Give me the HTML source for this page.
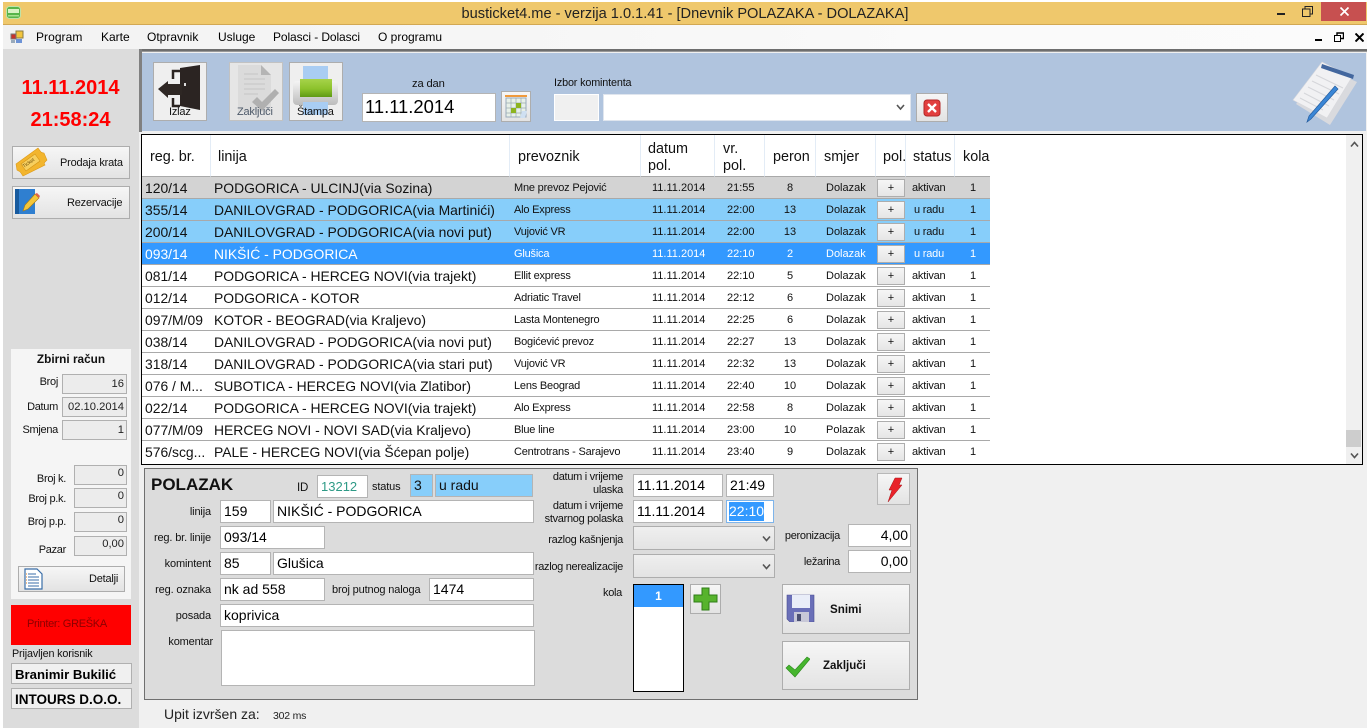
<!DOCTYPE html>
<html><head><meta charset="utf-8"><title>busticket4.me</title>
<style>
html,body{margin:0;padding:0}
body{width:1372px;height:728px;overflow:hidden;background:#fff;position:relative;font:12px/16px "Liberation Sans",sans-serif;color:#000}
div,span,svg{position:absolute;white-space:nowrap;box-sizing:border-box}
.l{font-size:11px;letter-spacing:-.15px;color:#111}
.m{font-size:11px;letter-spacing:-.3px;color:#111}
.in{background:#fff;border:1px solid #b4b4b4;font-size:14px;line-height:21px;padding-left:3px;overflow:hidden}
.sb{background:#ececec;border:1px solid #b0b0b0;font-size:11.2px;line-height:18px;text-align:right;padding-right:2px;color:#222}
.btn{background:linear-gradient(#f6f6f6,#e3e3e3);border:1px solid #adadad;color:#111}
.combo{background:linear-gradient(#efefef,#e3e3e3);border:1px solid #adadad}
.bl{font-size:11px;letter-spacing:-.2px;color:#111}
.row{left:142px;width:848px;height:22px;border-bottom:1px solid #a9a9a9;font-size:13.9px;line-height:21px;color:#111;background:#fff}
.row span{top:1px}
.r{left:3px;width:66px;overflow:hidden;height:20px}
.n{left:72px}
.p{left:372px;font-size:11px;letter-spacing:-.2px}
.d{left:510px;font-size:11px}
.t{left:585px;font-size:11px}
.o{left:628px;width:40px;text-align:center;font-size:11px}
.s{left:684px;font-size:11px}
.b{left:735px;top:2px!important;width:28px;height:18px;background:linear-gradient(#f6f6f6,#e6e6e6);border:1px solid #adadad;text-align:center;font-size:11px;line-height:17px;color:#111}
.st{left:770px;font-size:11px;letter-spacing:-.2px}
.k{left:824px;width:14px;text-align:center;font-size:11px}
.g{background:#d3d3d3}.c{background:#87cefa}.h{background:#3399ff;color:#fff}
.hd{top:135px;height:42px;background:#fff;border-right:1px solid #e3ecf6;border-bottom:1px solid #a9a9a9;font-size:14.4px;line-height:17px;color:#111}
.hd span{top:14px}
</style></head><body>

<!-- title bar -->
<div style="left:3px;top:2px;width:1364px;height:23px;background:#efc86c;border-bottom:1px solid #d2a853"></div>
<svg style="left:6px;top:6px" width="15" height="14" viewBox="0 0 15 14"><rect x=".5" y=".5" width="14" height="12" rx="3" fill="#58b44a" stroke="#bfe3a8"/><rect x="2" y="3" width="11" height="4" fill="#d9f2c4"/><rect x="2" y="9" width="11" height="1.500" fill="#a8e08e"/></svg>
<div style="left:3px;width:1364px;top:5px;text-align:center;font-size:14.6px;line-height:18px;color:#222">busticket4.me - verzija 1.0.1.41 - [Dnevnik POLAZAKA - DOLAZAKA]</div>
<div style="left:1277px;top:13px;width:8px;height:2px;background:#222"></div>
<svg style="left:1302px;top:6px" width="11" height="11" viewBox="0 0 11 11" fill="none" stroke="#222"><rect x=".5" y="3" width="7.500" height="7.500" stroke-width="1"/><path d="M3 3V.5h7.500V8H8"/></svg>
<div style="left:1321px;top:2px;width:45px;height:19px;background:#c75050"></div>
<svg style="left:1340px;top:7px" width="9" height="9" viewBox="0 0 9 9" stroke="#fff" stroke-width="1.700"><path d="M.5.5l8 8M8.500.5l-8 8"/></svg>

<!-- menu -->
<div style="left:3px;top:25px;width:1364px;height:24px;background:linear-gradient(90deg,#f2f2f2,#fafafa 70%,#fbfbfb)"></div>
<svg style="left:10px;top:30px" width="14" height="14" viewBox="0 0 14 14"><rect x="6" y="1" width="7" height="7" fill="#f2c53d" stroke="#8a7a40"/><rect x="1" y="4" width="5" height="5" fill="#c8322b" stroke="#777"/><rect x="6" y="9" width="6" height="4" fill="#6d93d6"/><rect x="1" y="10" width="4" height="3" fill="#9ab"/></svg>
<span style="left:36px;top:29px;letter-spacing:.05px">Program</span><span style="left:101px;top:29px">Karte</span><span style="left:147px;top:29px">Otpravnik</span><span style="left:218px;top:29px">Usluge</span><span style="left:273px;top:29px;letter-spacing:-.1px">Polasci - Dolasci</span><span style="left:378px;top:29px">O programu</span>
<div style="left:1315px;top:39px;width:7px;height:2px;background:#000"></div>
<svg style="left:1334px;top:32px" width="10" height="10" viewBox="0 0 10 10" fill="none" stroke="#000"><rect x=".5" y="3.500" width="6" height="6" stroke-width="1"/><path d="M3 3V1h6.500v5.500H7" stroke-width="1.400"/></svg>
<svg style="left:1355px;top:33px" width="9" height="9" viewBox="0 0 9 9" stroke="#000" stroke-width="2"><path d="M.5.5l8 8M8.500.5l-8 8"/></svg>

<!-- background -->
<div style="left:3px;top:49px;width:136px;height:679px;background:#dcdcdc"></div>
<div style="left:139px;top:49px;width:1228px;height:679px;background:#f0f0f0"></div>
<div style="left:139px;top:49px;width:1228px;height:3px;background:#6e6e6e;border-bottom:1px solid #999"></div>
<div style="left:139px;top:49px;width:3px;height:83px;background:#808080"></div>
<div style="left:142px;top:53px;width:1224px;height:78px;background:#b0c4de"></div>

<!-- left panel -->
<div style="left:3px;width:135px;top:77px;text-align:center;font-size:20px;line-height:22px;font-weight:bold;color:#f00">11.11.2014</div>
<div style="left:3px;width:135px;top:109px;text-align:center;font-size:20px;line-height:22px;font-weight:bold;color:#f00">21:58:24</div>
<div class="btn" style="left:12px;top:146px;width:118px;height:33px"></div>
<svg style="left:15px;top:147px" width="34" height="31" viewBox="0 0 34 31"><path d="M1 17L23 1l3 4c1 1 2 1 3 1l3 7-2 2c-1 1-1 2 0 3L8 29l-2-3c-1-2-3-2-4-3z" fill="#f2b52e" stroke="#dd9a18" stroke-width=".6"/><path d="M6 17l14-10 5 7-14 10z" fill="#f7cf5e" stroke="#d29417" stroke-width=".6"/><text x="9" y="21" font-size="5" font-family="Liberation Sans" fill="#6a4a08" transform="rotate(-35 9 21)">Ticket</text></svg>
<span class="bl" style="left:60px;top:155px">Prodaja krata</span>
<div class="btn" style="left:12px;top:186px;width:118px;height:33px"></div>
<svg style="left:14px;top:188px" width="26" height="28" viewBox="0 0 26 28"><rect x="1" y="1" width="20" height="25" fill="#2f7fd0"/><rect x="1" y="1" width="4" height="25" fill="#175a9e"/><path d="M9 23l2-6L21 6l4 4-11 11z" fill="#f4c63a" stroke="#a87a10" stroke-width=".6"/><path d="M21 6l2-1 3 3-1 2z" fill="#e0604f"/></svg>
<span class="bl" style="left:67px;top:195px">Rezervacije</span>

<div style="left:11px;top:349px;width:120px;height:250px;background:#f5f5f5"></div>
<div style="left:11px;width:120px;top:351px;text-align:center;font-size:11.8px;font-weight:bold;color:#111">Zbirni račun</div>
<span class="m" style="right:1314px;top:374px">Broj</span><div class="sb" style="left:62px;top:374px;width:65px;height:20px">16</div>
<span class="m" style="right:1314px;top:399px">Datum</span><div class="sb" style="left:62px;top:397px;width:65px;height:20px">02.10.2014</div>
<span class="m" style="right:1314px;top:422px">Smjena</span><div class="sb" style="left:62px;top:420px;width:65px;height:20px">1</div>
<span class="m" style="right:1306px;top:471px">Broj k.</span><div class="sb" style="left:74px;top:465px;width:53px;height:20px;line-height:15px">0</div>
<span class="m" style="right:1306px;top:491px">Broj p.k.</span><div class="sb" style="left:74px;top:488px;width:53px;height:20px;line-height:15px">0</div>
<span class="m" style="right:1306px;top:514px">Broj p.p.</span><div class="sb" style="left:74px;top:512px;width:53px;height:20px;line-height:15px">0</div>
<span class="m" style="right:1306px;top:542px">Pazar</span><div class="sb" style="left:74px;top:536px;width:53px;height:20px;line-height:15px">0,00</div>
<div class="btn" style="left:18px;top:566px;width:107px;height:26px"></div>
<svg style="left:23px;top:568px" width="21" height="22" viewBox="0 0 21 22"><path d="M2 1h12l5 5v15H2z" fill="#fff" stroke="#3a6ea8" stroke-width="1.200"/><path d="M5 6h8M5 9h11M5 12h11M5 15h11M5 18h11" stroke="#3a6ea8"/><path d="M3 6h1M3 9h1M3 12h1M3 15h1" stroke="#e08020"/></svg>
<span class="bl" style="left:89px;top:571px">Detalji</span>
<div style="left:11px;top:605px;width:120px;height:40px;background:#f00"></div>
<span style="left:27px;top:616px;color:#8b0000;font-size:11px;letter-spacing:-.3px">Printer: GREŠKA</span>
<span class="l" style="left:12px;top:646px;font-size:10.8px">Prijavljen korisnik</span>
<div style="left:11px;top:663px;width:121px;height:21px;background:#f0f0f0;border:1px solid #b0b0b0;font-weight:bold;font-size:13.2px;line-height:22px;padding-left:3px">Branimir Bukilić</div>
<div style="left:11px;top:688px;width:121px;height:21px;background:#f0f0f0;border:1px solid #b0b0b0;font-weight:bold;font-size:13.5px;line-height:22px;padding-left:3px">INTOURS D.O.O.</div>

<!-- toolbar -->
<div class="btn" style="left:153px;top:62px;width:54px;height:59px;background:#efefef"></div>
<svg style="left:157px;top:64px" width="46" height="47" viewBox="0 0 46 47"><path d="M16 15V7h7M16 34v8h7" fill="none" stroke="#2a2320" stroke-width="2.500"/><path d="M23 4L43 1v45l-20-4z" fill="#2b2422"/><rect x="27" y="19" width="2" height="3" fill="#ddd"/><path d="M1 25l10-8v3h14v11H11v3z" fill="#2e2724"/></svg>
<span class="bl" style="left:169px;top:104px">Izlaz</span>
<div class="btn" style="left:229px;top:62px;width:54px;height:59px;background:#e6e6e6;border-color:#c2c2c2"></div>
<svg style="left:236px;top:64px" width="46" height="50" viewBox="0 0 46 50"><path d="M2 1h23l10 10v37H2z" fill="#dbdbdb"/><path d="M25 1l10 10H25z" fill="#b5b5b5"/><path d="M8 10h14M8 15h21M8 20h21M8 25h21M8 30h14" stroke="#c4c4c4"/><path d="M16 38l5-5 5 5 13-13 4 4-17 18z" fill="#b0b0b0"/></svg>
<span class="bl" style="left:237px;top:104px;color:#4e5a6a">Zaključi</span>
<div class="btn" style="left:289px;top:62px;width:54px;height:59px;background:#efefef"></div>
<svg style="left:292px;top:64px" width="48" height="52" viewBox="0 0 48 52"><defs><linearGradient id="g1" x1="0" y1="0" x2="0" y2="1"><stop offset="0" stop-color="#a6d34a"/><stop offset=".55" stop-color="#8cc22c"/><stop offset="1" stop-color="#5f9a14"/></linearGradient><linearGradient id="g2" x1="0" y1="0" x2="0" y2="1"><stop offset="0" stop-color="#f4f4f4"/><stop offset="1" stop-color="#bcbcbc"/></linearGradient></defs><rect x="11" y="2" width="25" height="15" fill="#a9cdf3"/><rect x="1" y="17" width="45" height="24" rx="4" fill="url(#g2)"/><rect x="8" y="15" width="32" height="18" fill="url(#g1)"/><rect x="11" y="38" width="25" height="13" fill="#a9cdf3"/></svg>
<span class="bl" style="left:297px;top:104px">Štampa</span>
<span class="l" style="left:412px;top:76px;font-size:11.2px">za dan</span>
<div style="left:362px;top:93px;width:134px;height:29px;background:#fff;border:1px solid #b4b4b4;font-size:18.4px;line-height:26px;padding-left:2px">11.11.2014</div>
<div class="btn" style="left:501px;top:91px;width:30px;height:31px"></div>
<svg style="left:504px;top:94px" width="24" height="25" viewBox="0 0 24 25"><rect x="1" y="1" width="22" height="2" fill="#ef9a3c"/><rect x="2" y="4" width="20" height="19" fill="#e8f0e8" stroke="#9ab"/><path d="M7 4v19M12 4v19M17 4v19M2 9h20M2 14h20M2 19h20" stroke="#9aaab0" stroke-width=".7"/><rect x="7" y="14" width="5" height="5" fill="#8db41f"/><rect x="12" y="9" width="5" height="5" fill="#8db41f"/><path d="M16 24l2-7h5l-2 7z" fill="#cfe0f2"/></svg>
<span class="l" style="left:554px;top:75px;font-size:10.8px">Izbor komintenta</span>
<div style="left:554px;top:94px;width:45px;height:27px;background:#f0f0f0;border:1px solid #fff"></div>
<div style="left:603px;top:94px;width:308px;height:27px;background:#fff;border:1px solid #dfe5ee"></div>
<svg style="left:896px;top:104px" width="9" height="7" viewBox="0 0 9 7" fill="none" stroke="#555" stroke-width="1.600"><path d="M1 1l3.500 4 3.500-4"/></svg>
<div class="btn" style="left:916px;top:93px;width:32px;height:29px"></div>
<svg style="left:923px;top:99px" width="18" height="18" viewBox="0 0 18 18"><rect x="1" y="1" width="16" height="16" rx="3" fill="#e23f3f" stroke="#b32828"/><path d="M5 5l8 8M13 5l-8 8" stroke="#fff" stroke-width="2.400"/></svg>
<svg style="left:1290px;top:60px" width="70" height="68" viewBox="0 0 70 68"><path d="M6 44l30-36 31 14-27 43z" fill="#d9dade"/><path d="M3 40L32 2l30 15-25 41z" fill="#f1f1f3" stroke="#d8d8dc" stroke-width=".6"/><path d="M32 4l32 11-1 4-32-11z" fill="#43679e"/><path d="M26 15l27 13M22 21l27 13M18 27l26 13M14 33l25 13M10 38l23 12" stroke="#d5d6da"/><path d="M17 62l2-6 26-30 3 3-27 30z" fill="#3a86d6" stroke="#245c9e" stroke-width=".7"/></svg>

<!-- grid -->
<div style="left:141px;top:134px;width:1222px;height:331px;background:#fff;border:1px solid #000"></div>
<div class="hd" style="left:142px;width:69px"><span style="left:8px">reg. br.</span></div>
<div class="hd" style="left:211px;width:299px"><span style="left:7px">linija</span></div>
<div class="hd" style="left:510px;width:131px"><span style="left:8px">prevoznik</span></div>
<div class="hd" style="left:641px;width:74px"><span style="left:7px;top:6px">datum<br>pol.</span></div>
<div class="hd" style="left:715px;width:50px"><span style="left:8px;top:6px">vr.<br>pol.</span></div>
<div class="hd" style="left:765px;width:51px"><span style="left:8px">peron</span></div>
<div class="hd" style="left:816px;width:60px"><span style="left:8px">smjer</span></div>
<div class="hd" style="left:876px;width:30px"><span style="left:7px">pol.</span></div>
<div class="hd" style="left:906px;width:49px"><span style="left:7px">status</span></div>
<div class="hd" style="left:955px;width:35px;border-right:0"><span style="left:8px">kola</span></div>

<div class="row g" style="top:177px"><span class="r">120/14</span><span class="n">PODGORICA - ULCINJ(via Sozina)</span><span class="p">Mne prevoz Pejović</span><span class="d">11.11.2014</span><span class="t">21:55</span><span class="o">8</span><span class="s">Dolazak</span><span class="b">+</span><span class="st">aktivan</span><span class="k">1</span></div>
<div class="row c" style="top:199px"><span class="r">355/14</span><span class="n">DANILOVGRAD - PODGORICA(via Martinići)</span><span class="p">Alo Express</span><span class="d">11.11.2014</span><span class="t">22:00</span><span class="o">13</span><span class="s">Dolazak</span><span class="b">+</span><span class="st" style="left:772px">u radu</span><span class="k">1</span></div>
<div class="row c" style="top:221px"><span class="r">200/14</span><span class="n">DANILOVGRAD - PODGORICA(via novi put)</span><span class="p">Vujović VR</span><span class="d">11.11.2014</span><span class="t">22:00</span><span class="o">13</span><span class="s">Dolazak</span><span class="b">+</span><span class="st" style="left:772px">u radu</span><span class="k">1</span></div>
<div class="row h" style="top:243px"><span class="r">093/14</span><span class="n">NIKŠIĆ - PODGORICA</span><span class="p">Glušica</span><span class="d">11.11.2014</span><span class="t">22:10</span><span class="o">2</span><span class="s">Dolazak</span><span class="b">+</span><span class="st" style="left:772px">u radu</span><span class="k">1</span></div>
<div class="row" style="top:265px"><span class="r">081/14</span><span class="n">PODGORICA - HERCEG NOVI(via trajekt)</span><span class="p">Ellit express</span><span class="d">11.11.2014</span><span class="t">22:10</span><span class="o">5</span><span class="s">Dolazak</span><span class="b">+</span><span class="st">aktivan</span><span class="k">1</span></div>
<div class="row" style="top:287px"><span class="r">012/14</span><span class="n">PODGORICA - KOTOR</span><span class="p">Adriatic Travel</span><span class="d">11.11.2014</span><span class="t">22:12</span><span class="o">6</span><span class="s">Dolazak</span><span class="b">+</span><span class="st">aktivan</span><span class="k">1</span></div>
<div class="row" style="top:309px"><span class="r">097/M/09</span><span class="n">KOTOR - BEOGRAD(via Kraljevo)</span><span class="p">Lasta Montenegro</span><span class="d">11.11.2014</span><span class="t">22:25</span><span class="o">6</span><span class="s">Dolazak</span><span class="b">+</span><span class="st">aktivan</span><span class="k">1</span></div>
<div class="row" style="top:331px"><span class="r">038/14</span><span class="n">DANILOVGRAD - PODGORICA(via novi put)</span><span class="p">Bogićević prevoz</span><span class="d">11.11.2014</span><span class="t">22:27</span><span class="o">13</span><span class="s">Dolazak</span><span class="b">+</span><span class="st">aktivan</span><span class="k">1</span></div>
<div class="row" style="top:353px"><span class="r">318/14</span><span class="n">DANILOVGRAD - PODGORICA(via stari put)</span><span class="p">Vujović VR</span><span class="d">11.11.2014</span><span class="t">22:32</span><span class="o">13</span><span class="s">Dolazak</span><span class="b">+</span><span class="st">aktivan</span><span class="k">1</span></div>
<div class="row" style="top:375px"><span class="r">076 / M...</span><span class="n">SUBOTICA - HERCEG NOVI(via Zlatibor)</span><span class="p">Lens Beograd</span><span class="d">11.11.2014</span><span class="t">22:40</span><span class="o">10</span><span class="s">Dolazak</span><span class="b">+</span><span class="st">aktivan</span><span class="k">1</span></div>
<div class="row" style="top:397px"><span class="r">022/14</span><span class="n">PODGORICA - HERCEG NOVI(via trajekt)</span><span class="p">Alo Express</span><span class="d">11.11.2014</span><span class="t">22:58</span><span class="o">8</span><span class="s">Dolazak</span><span class="b">+</span><span class="st">aktivan</span><span class="k">1</span></div>
<div class="row" style="top:419px"><span class="r">077/M/09</span><span class="n">HERCEG NOVI - NOVI SAD(via Kraljevo)</span><span class="p">Blue line</span><span class="d">11.11.2014</span><span class="t">23:00</span><span class="o">10</span><span class="s">Polazak</span><span class="b">+</span><span class="st">aktivan</span><span class="k">1</span></div>
<div class="row" style="top:441px;height:23px;border:0"><span class="r">576/scg...</span><span class="n">PALE - HERCEG NOVI(via Šćepan polje)</span><span class="p">Centrotrans - Sarajevo</span><span class="d">11.11.2014</span><span class="t">23:40</span><span class="o">9</span><span class="s">Dolazak</span><span class="b">+</span><span class="st">aktivan</span><span class="k">1</span></div>

<!-- scrollbar -->
<div style="left:1346px;top:135px;width:16px;height:329px;background:#f0f0f0"></div>
<div style="left:1346px;top:430px;width:15px;height:17px;background:#cdcdcd"></div>
<svg style="left:1350px;top:141px" width="9" height="7" viewBox="0 0 9 7" fill="none" stroke="#555" stroke-width="1.600"><path d="M1 5.500l3.500-4 3.500 4"/></svg>
<svg style="left:1350px;top:452px" width="9" height="7" viewBox="0 0 9 7" fill="none" stroke="#555" stroke-width="1.600"><path d="M1 1.500l3.500 4 3.500-4"/></svg>

<!-- form -->
<div style="left:144px;top:468px;width:774px;height:232px;background:#dcdcdc;border:1px solid #6f6f6f"></div>
<span style="left:151px;top:476px;font-size:17px;line-height:18px;font-weight:bold;color:#111">POLAZAK</span>
<span class="l" style="left:297px;top:480px;font-size:11.5px">ID</span>
<div class="in" style="left:317px;top:475px;width:51px;height:23px;color:#2e9a86;font-size:13px">13212</div>
<span class="l" style="left:372px;top:479px">status</span>
<div class="in" style="left:410px;top:474px;width:23px;height:23px;background:#87cefa;color:#111">3</div>
<div class="in" style="left:435px;top:474px;width:98px;height:23px;background:#87cefa;color:#111">u radu</div>

<span class="l" style="right:1161px;top:504px">linija</span>
<div class="in" style="left:220px;top:500px;width:51px;height:23px">159</div><div class="in" style="left:273px;top:500px;width:261px;height:23px">NIKŠIĆ - PODGORICA</div>
<span class="l" style="right:1161px;top:530px">reg. br. linije</span>
<div class="in" style="left:220px;top:526px;width:105px;height:23px">093/14</div>
<span class="l" style="right:1161px;top:556px">komintent</span>
<div class="in" style="left:220px;top:552px;width:51px;height:23px">85</div><div class="in" style="left:273px;top:552px;width:261px;height:23px">Glušica</div>
<span class="l" style="right:1161px;top:582px">reg. oznaka</span>
<div class="in" style="left:220px;top:578px;width:105px;height:23px">nk ad 558</div>
<span class="l" style="left:332px;top:582px">broj putnog naloga</span>
<div class="in" style="left:429px;top:578px;width:105px;height:23px">1474</div>
<span class="l" style="right:1161px;top:608px">posada</span>
<div class="in" style="left:220px;top:604px;width:314px;height:23px">koprivica</div>
<span class="l" style="right:1159px;top:634px">komentar</span>
<div class="in" style="left:221px;top:630px;width:314px;height:56px"></div>

<span class="m" style="right:749px;top:471px;text-align:right;line-height:13px">datum i vrijeme<br>ulaska</span>
<div class="in" style="left:633px;top:474px;width:90px;height:23px">11.11.2014</div><div class="in" style="left:726px;top:474px;width:48px;height:23px">21:49</div>
<span class="m" style="right:749px;top:500px;text-align:right;line-height:13px">datum i vrijeme<br>stvarnog polaska</span>
<div class="in" style="left:633px;top:500px;width:90px;height:23px">11.11.2014</div>
<div class="in" style="left:726px;top:500px;width:48px;height:23px;border-color:#7eb4ea;padding-left:2px"><span style="left:2px;top:1px;background:#3399ff;color:#fff;height:19px;line-height:19px">22:10</span></div>
<span class="m" style="right:749px;top:532px">razlog kašnjenja</span>
<div class="combo" style="left:633px;top:526px;width:142px;height:24px"></div>
<svg style="left:762px;top:535px" width="9" height="7" viewBox="0 0 9 7" fill="none" stroke="#555" stroke-width="1.600"><path d="M1 1.500l3.500 4 3.500-4"/></svg>
<span class="m" style="right:749px;top:559px">razlog nerealizacije</span>
<div class="combo" style="left:633px;top:554px;width:142px;height:24px"></div>
<svg style="left:762px;top:563px" width="9" height="7" viewBox="0 0 9 7" fill="none" stroke="#555" stroke-width="1.600"><path d="M1 1.500l3.500 4 3.500-4"/></svg>
<span class="m" style="right:750px;top:585px">kola</span>
<div style="left:633px;top:584px;width:51px;height:108px;background:#fff;border:1px solid #000"></div>
<div style="left:634px;top:585px;width:49px;height:22px;background:#3399ff;color:#fff;text-align:center;font-weight:bold;line-height:23px">1</div>
<div class="btn" style="left:690px;top:584px;width:31px;height:30px"></div>
<svg style="left:693px;top:587px" width="25" height="24" viewBox="0 0 25 24"><path d="M9 1h7v7h8v7h-8v8H9v-8H1V8h8z" fill="#57b32d" stroke="#2f7d17"/></svg>
<div class="btn" style="left:877px;top:473px;width:33px;height:32px;border-color:#b8b8b8"></div>
<svg style="left:886px;top:477px" width="17" height="26" viewBox="0 0 17 26"><path d="M9 1h7l-3 7h3L2 25l4-12H3z" fill="#e8232a" stroke="#a51216" stroke-width=".5"/></svg>
<span class="m" style="right:532px;top:528px">peronizacija</span>
<div class="in" style="left:848px;top:524px;width:63px;height:23px;text-align:right;padding:0 2px 0 0">4,00</div>
<span class="m" style="right:532px;top:554px">ležarina</span>
<div class="in" style="left:848px;top:550px;width:63px;height:23px;text-align:right;padding:0 2px 0 0">0,00</div>
<div class="btn" style="left:782px;top:584px;width:128px;height:50px"></div>
<svg style="left:786px;top:594px" width="29" height="28" viewBox="0 0 29 28"><path d="M1 1h27v27H4l-3-3z" fill="#6a6fb8" stroke="#4b4f92" stroke-width=".6"/><rect x="6" y="1" width="18" height="13" fill="#e9edf8"/><rect x="8" y="18" width="15" height="10" fill="#c8c8d8"/><rect x="11" y="20" width="4" height="7" fill="#4b4f72"/></svg>
<span style="left:830px;top:602px;font-size:11.6px;font-weight:bold;color:#111">Snimi</span>
<div class="btn" style="left:782px;top:641px;width:128px;height:49px"></div>
<svg style="left:785px;top:656px" width="25" height="22" viewBox="0 0 25 22"><path d="M1 12l3-3 6 5L22 1l3 2L10 21z" fill="#46b52e" stroke="#2c8a1e" stroke-width=".6"/></svg>
<span style="left:823px;top:658px;font-size:11.5px;font-weight:bold;color:#111">Zaključi</span>

<span style="left:164px;top:706px;font-size:14px;color:#222">Upit izvršen za:</span>
<span style="left:273px;top:708px;font-size:10.5px;letter-spacing:-.2px;color:#222">302 ms</span>
</body></html>
